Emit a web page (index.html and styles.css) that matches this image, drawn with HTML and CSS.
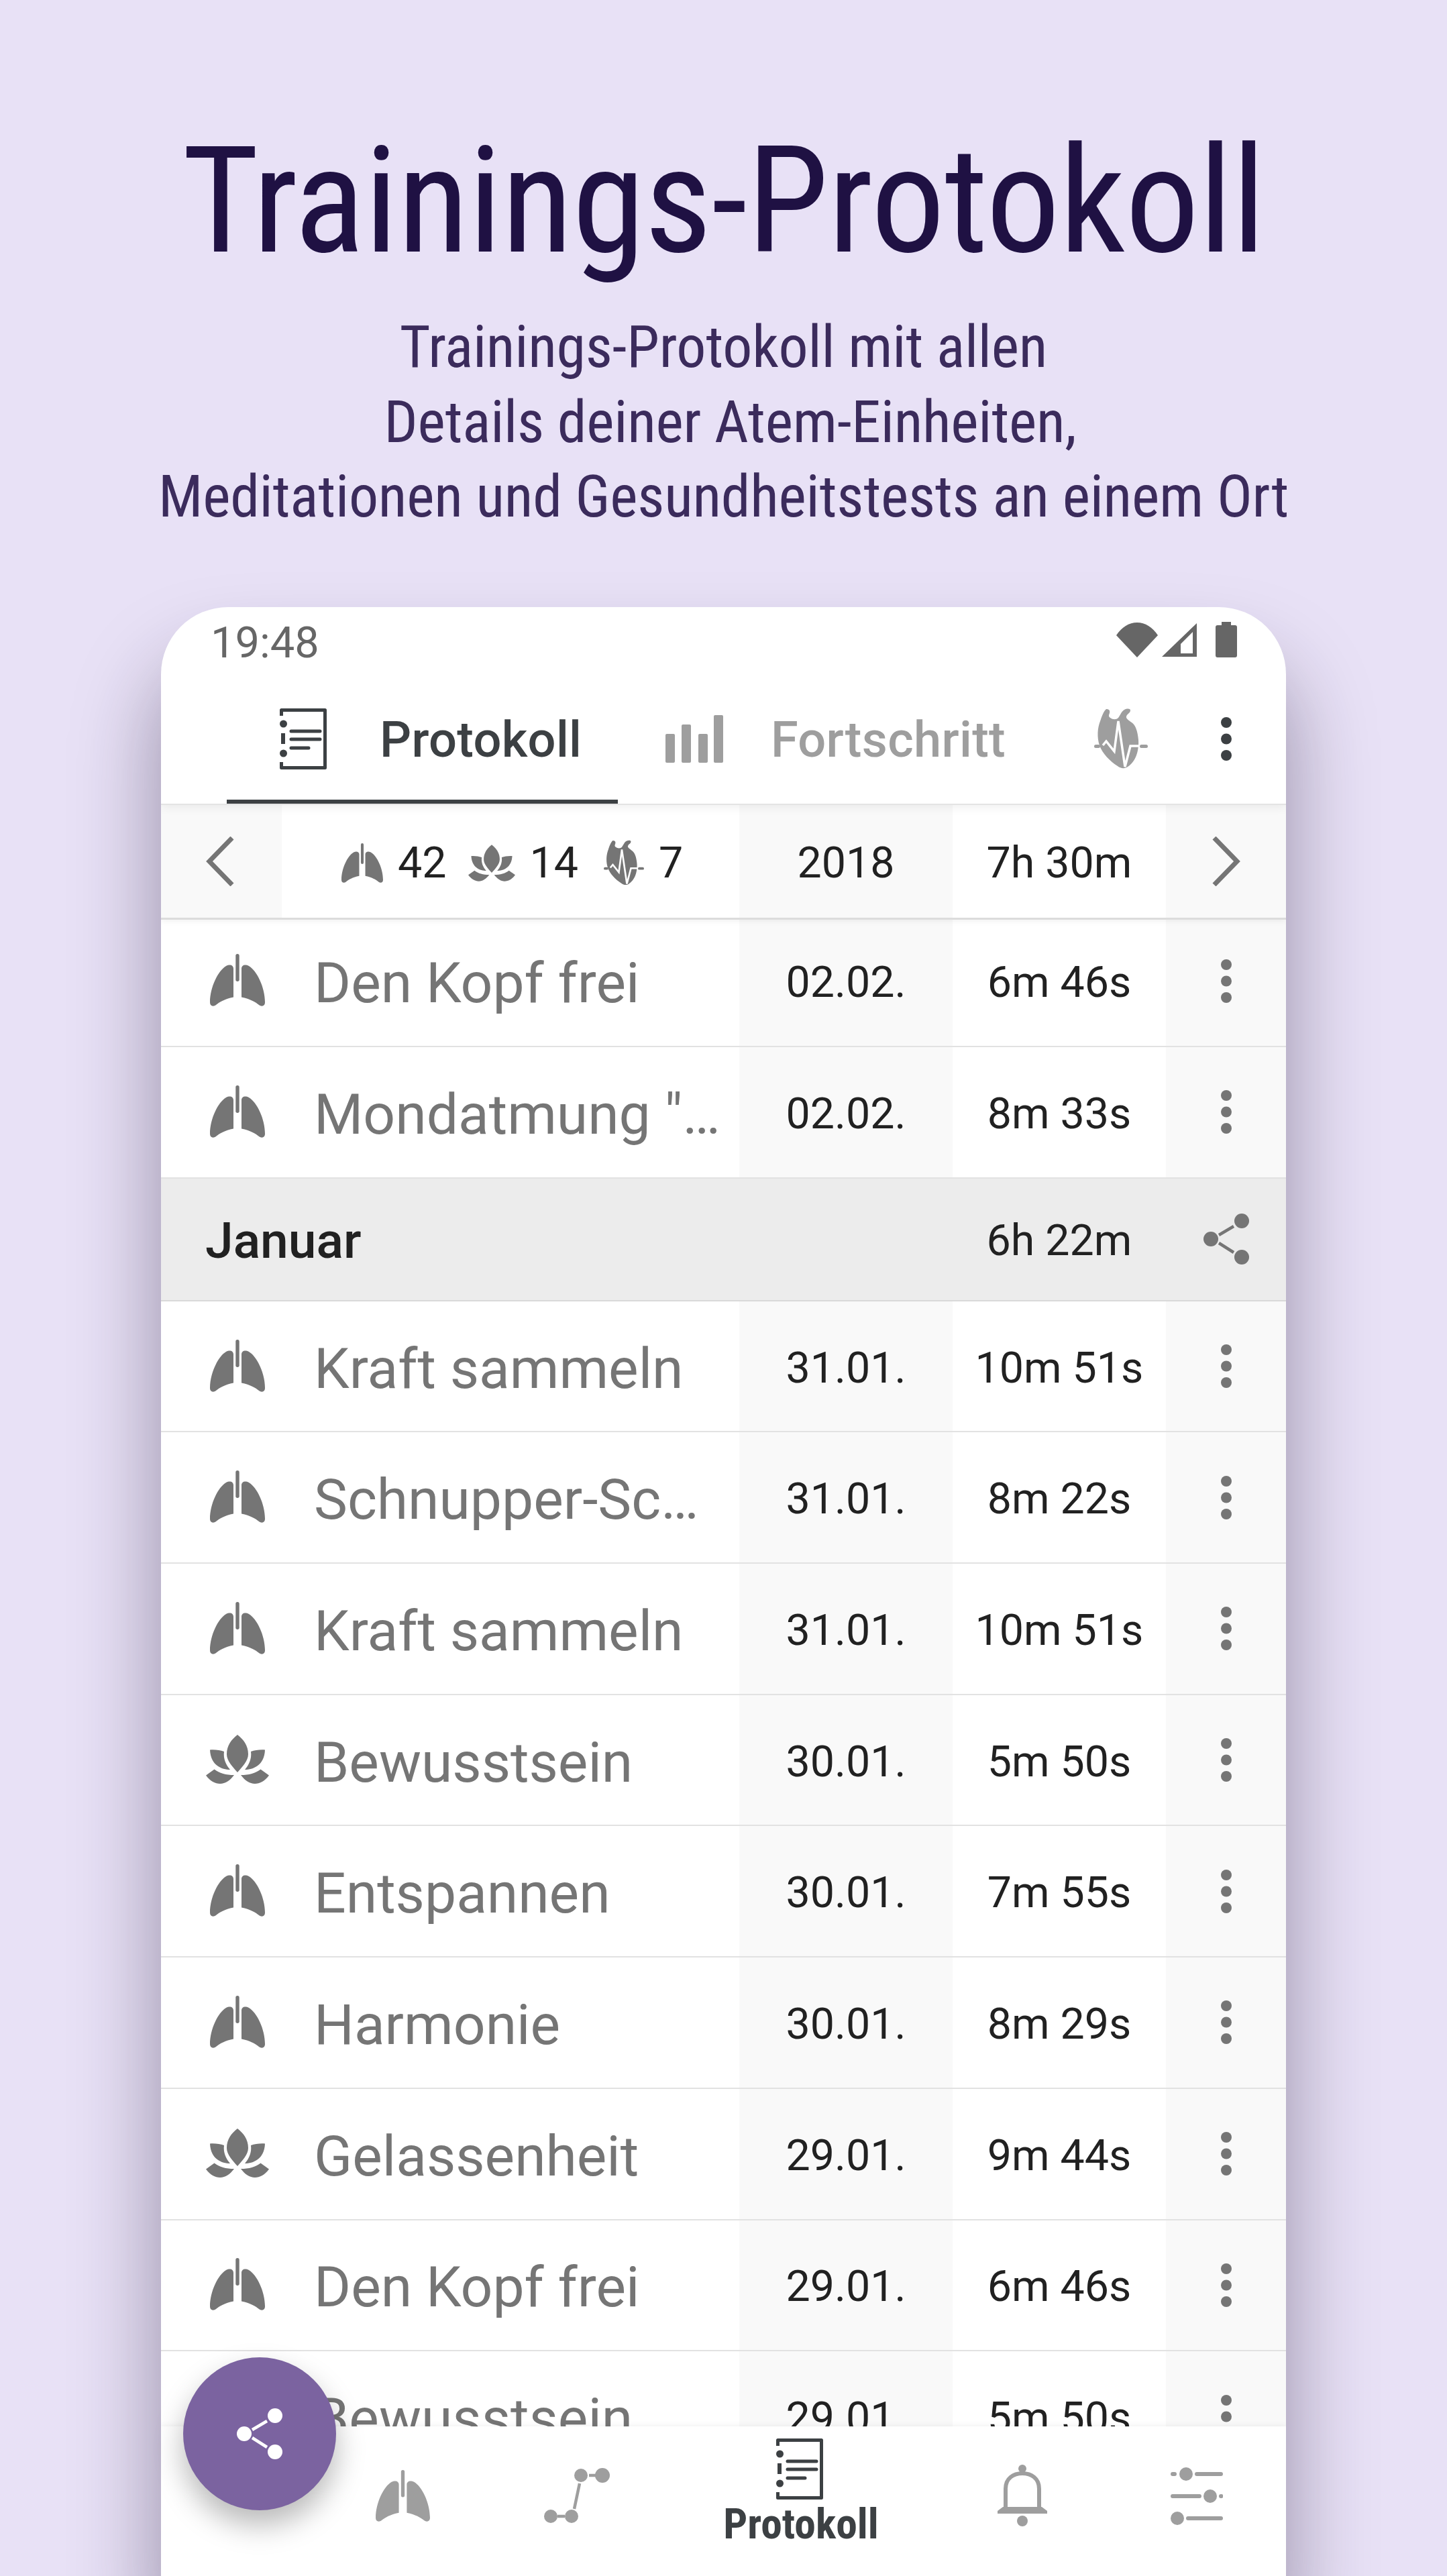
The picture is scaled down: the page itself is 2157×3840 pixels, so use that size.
FILE: index.html
```html
<!DOCTYPE html>
<html lang="de">
<head>
    <meta charset="UTF-8">
    <meta name="viewport" content="width=device-width, initial-scale=1.0">
    <title>Trainings-Protokoll</title>
    <link rel="stylesheet" href="styles.css">
</head>
<body>
    <svg class="sprites" xmlns="http://www.w3.org/2000/svg">
        <symbol id="lung" viewBox="0 0 82 78">
            <path d="M35 22V64.5C22 67 14 72 9 76C5 79 0 78 0 72C0 50 12 25 24 18C30 15 35 17 35 22Z"/>
            <path d="M47 22V64.5C60 67 68 72 73 76C77 79 82 78 82 72C82 50 70 25 58 18C52 15 47 17 47 22Z"/>
            <rect x="38.3" y="0" width="5.4" height="41" rx="2.7"/>
        </symbol>
        <symbol id="lotus" viewBox="0 0 94 73">
            <path d="M47 0C38 7 31 16 31 29C31 39 40 48 47 56C54 48 63 39 63 29C63 16 56 7 47 0Z"/>
            <path d="M6 22.5C14 22 21 23 27 25C25.5 36 30 45 36 52C24 52 7 46 6 22.5Z"/>
            <path d="M12.5 51.5L0 60.5C6 69 14 73 21 73C29 73 36 68 42 60C30 60 20 57.5 12.5 51.5Z"/>
            <g transform="matrix(-1 0 0 1 94 0)">
                <path d="M6 22.5C14 22 21 23 27 25C25.5 36 30 45 36 52C24 52 7 46 6 22.5Z"/>
                <path d="M12.5 51.5L0 60.5C6 69 14 73 21 73C29 73 36 68 42 60C30 60 20 57.5 12.5 51.5Z"/>
            </g>
        </symbol>
        <symbol id="heart" viewBox="0 0 80 92">
            <path d="M18 2C22 2 24 4 23 8C22 11 21 13 24 15C28 18 33 18 36 15C39 11 41 5 45 3C49 1 54 1 54 4C54 8 49 9 48 13C47 16 52 19 56 22C62 26 65 36 66 48C67 62 63 80 50 88C46 91 40 91 35 87C24 80 12 68 8 56C4 44 5 30 9 20C11 14 14 5 18 2Z"/>
            <path d="M13 56L18 50L30 65L36 20L46 88L54 57H68" fill="none" stroke="#fff" stroke-width="3.5"/>
            <rect x="0" y="55" width="9" height="5" rx="2.5"/>
            <rect x="68" y="55" width="12" height="5" rx="2.5"/>
        </symbol>
        <symbol id="log" viewBox="0 0 70 91">
            <path d="M2.5 11V2.5H67.5V88.5H2.5V80" fill="none" stroke="currentColor" stroke-width="5" stroke-linejoin="round"/>
            <circle cx="5.5" cy="23" r="5.5"/>
            <circle cx="5.5" cy="67" r="5.5"/>
            <rect x="2" y="37" width="6" height="16"/>
            <path d="M17 34H60M17 46H60M17 59H43" fill="none" stroke="currentColor" stroke-width="5" stroke-linecap="round"/>
        </symbol>
        <symbol id="bars" viewBox="0 0 87 71">
            <rect x="0" y="28" width="14" height="43" rx="2"/>
            <rect x="24" y="14" width="14" height="57" rx="2"/>
            <rect x="49" y="28" width="14" height="43" rx="2"/>
            <rect x="72" y="0" width="14" height="71" rx="2"/>
        </symbol>
        <symbol id="dots" viewBox="0 0 16 65">
            <circle cx="8" cy="8" r="8"/>
            <circle cx="8" cy="32.5" r="8"/>
            <circle cx="8" cy="57" r="8"/>
        </symbol>
        <symbol id="share" viewBox="0 0 68 76">
            <circle cx="11" cy="38" r="11"/>
            <circle cx="57" cy="11" r="11"/>
            <circle cx="57" cy="65" r="11"/>
            <path d="M23 32L45 19M23 44L45 58" fill="none" stroke="currentColor" stroke-width="4.5"/>
        </symbol>
        <symbol id="path" viewBox="0 0 99 83">
            <circle cx="55" cy="11" r="10"/>
            <circle cx="87" cy="11" r="11"/>
            <circle cx="10" cy="72" r="10"/>
            <circle cx="41" cy="72" r="10"/>
            <path d="M67 11H77M20 72H31M53 23L45 61" fill="none" stroke="currentColor" stroke-width="4.5"/>
        </symbol>
        <symbol id="bell" viewBox="0 0 74 93">
            <circle cx="37" cy="6" r="6"/>
            <circle cx="37" cy="84" r="8"/>
            <path d="M12 66V36C12 20 24 13 37 13C50 13 62 20 62 36V66" fill="none" stroke="currentColor" stroke-width="6"/>
            <path d="M0 73V69L8 63H66L74 69V73Z"/>
        </symbol>
        <symbol id="sliders" viewBox="0 0 78 86">
            <circle cx="23" cy="10" r="10"/>
            <circle cx="59" cy="43" r="10"/>
            <circle cx="10" cy="76" r="10"/>
            <path d="M3 10H6M39 10H75M3 43H43M75 43H75.5M26 76H75" fill="none" stroke="currentColor" stroke-width="6" stroke-linecap="round"/>
        </symbol>
    </svg>

    <header class="intro">
        <h1 class="intro-title">Trainings-Protokoll</h1>
        <p class="intro-text">Trainings-Protokoll mit allen<br>&nbsp;Details deiner Atem-Einheiten,<br>Meditationen und Gesundheitstests an einem Ort</p>
    </header>

    <main class="phone">
        <div class="status">
            <span class="status-time">19:48</span>
            <div class="status-icons">
                <svg class="wifi" viewBox="0 0 62 52"><path d="M0 19C8 7 19 0 31 0C43 0 54 7 62 19L31 52Z"/></svg>
                <svg class="signal" viewBox="0 0 52 50"><path fill-rule="evenodd" d="M52 0V50H0ZM28 45H46V13L28 31Z"/></svg>
                <svg class="battery" viewBox="0 0 32 53"><path d="M9 0H23V5H29C31 5 32 6 32 8V50C32 52 31 53 29 53H3C1 53 0 52 0 50V8C0 6 1 5 3 5H9Z"/></svg>
            </div>
        </div>

        <nav class="tabs">
            <div class="tab tab-active">
                <svg class="icon-log"><use href="#log"/></svg>
                <span>Protokoll</span>
            </div>
            <div class="tab">
                <svg class="icon-bars"><use href="#bars"/></svg>
                <span>Fortschritt</span>
            </div>
            <svg class="icon-heart"><use href="#heart"/></svg>
            <svg class="icon-dots tabs-menu"><use href="#dots"/></svg>
        </nav>

        <section class="summary">
            <div class="cell-nav">
                <svg class="chevron" viewBox="0 0 42 74"><path d="M39 2L5 37L39 72"/></svg>
            </div>
            <div class="summary-stats">
                <svg class="stat-lung"><use href="#lung"/></svg><span>42</span>
                <svg class="stat-lotus"><use href="#lotus"/></svg><span>14</span>
                <svg class="stat-heart"><use href="#heart"/></svg><span>7</span>
            </div>
            <div class="cell-date">2018</div>
            <div class="cell-time">7h 30m</div>
            <div class="cell-menu">
                <svg class="chevron" viewBox="0 0 42 74"><path d="M3 2L37 37L3 72"/></svg>
            </div>
        </section>

        <div class="list">
            <div class="row">
                <div class="row-name"><span class="row-icon"><svg class="icon-lung"><use href="#lung"/></svg></span><span>Den Kopf frei</span></div>
                <div class="cell-date">02.02.</div><div class="cell-time">6m 46s</div>
                <div class="cell-menu"><svg class="icon-dots"><use href="#dots"/></svg></div>
            </div>
            <div class="row">
                <div class="row-name"><span class="row-icon"><svg class="icon-lung"><use href="#lung"/></svg></span><span>Mondatmung "…</span></div>
                <div class="cell-date">02.02.</div><div class="cell-time">8m 33s</div>
                <div class="cell-menu"><svg class="icon-dots"><use href="#dots"/></svg></div>
            </div>
            <div class="month">
                <span class="month-name">Januar</span>
                <span class="cell-time">6h 22m</span>
                <div class="cell-menu"><svg class="icon-share"><use href="#share"/></svg></div>
            </div>
            <div class="row">
                <div class="row-name"><span class="row-icon"><svg class="icon-lung"><use href="#lung"/></svg></span><span>Kraft sammeln</span></div>
                <div class="cell-date">31.01.</div><div class="cell-time">10m 51s</div>
                <div class="cell-menu"><svg class="icon-dots"><use href="#dots"/></svg></div>
            </div>
            <div class="row">
                <div class="row-name"><span class="row-icon"><svg class="icon-lung"><use href="#lung"/></svg></span><span>Schnupper-Sc…</span></div>
                <div class="cell-date">31.01.</div><div class="cell-time">8m 22s</div>
                <div class="cell-menu"><svg class="icon-dots"><use href="#dots"/></svg></div>
            </div>
            <div class="row">
                <div class="row-name"><span class="row-icon"><svg class="icon-lung"><use href="#lung"/></svg></span><span>Kraft sammeln</span></div>
                <div class="cell-date">31.01.</div><div class="cell-time">10m 51s</div>
                <div class="cell-menu"><svg class="icon-dots"><use href="#dots"/></svg></div>
            </div>
            <div class="row">
                <div class="row-name"><span class="row-icon"><svg class="icon-lotus"><use href="#lotus"/></svg></span><span>Bewusstsein</span></div>
                <div class="cell-date">30.01.</div><div class="cell-time">5m 50s</div>
                <div class="cell-menu"><svg class="icon-dots"><use href="#dots"/></svg></div>
            </div>
            <div class="row">
                <div class="row-name"><span class="row-icon"><svg class="icon-lung"><use href="#lung"/></svg></span><span>Entspannen</span></div>
                <div class="cell-date">30.01.</div><div class="cell-time">7m 55s</div>
                <div class="cell-menu"><svg class="icon-dots"><use href="#dots"/></svg></div>
            </div>
            <div class="row">
                <div class="row-name"><span class="row-icon"><svg class="icon-lung"><use href="#lung"/></svg></span><span>Harmonie</span></div>
                <div class="cell-date">30.01.</div><div class="cell-time">8m 29s</div>
                <div class="cell-menu"><svg class="icon-dots"><use href="#dots"/></svg></div>
            </div>
            <div class="row">
                <div class="row-name"><span class="row-icon"><svg class="icon-lotus"><use href="#lotus"/></svg></span><span>Gelassenheit</span></div>
                <div class="cell-date">29.01.</div><div class="cell-time">9m 44s</div>
                <div class="cell-menu"><svg class="icon-dots"><use href="#dots"/></svg></div>
            </div>
            <div class="row">
                <div class="row-name"><span class="row-icon"><svg class="icon-lung"><use href="#lung"/></svg></span><span>Den Kopf frei</span></div>
                <div class="cell-date">29.01.</div><div class="cell-time">6m 46s</div>
                <div class="cell-menu"><svg class="icon-dots"><use href="#dots"/></svg></div>
            </div>
            <div class="row">
                <div class="row-name"><span class="row-icon"><svg class="icon-lotus"><use href="#lotus"/></svg></span><span>Bewusstsein</span></div>
                <div class="cell-date">29.01.</div><div class="cell-time">5m 50s</div>
                <div class="cell-menu"><svg class="icon-dots"><use href="#dots"/></svg></div>
            </div>
        </div>

        <footer class="bottom-nav">
            <svg class="nav-lung"><use href="#lung"/></svg>
            <svg class="nav-path"><use href="#path"/></svg>
            <div class="nav-active">
                <svg class="icon-log"><use href="#log"/></svg>
                <span class="nav-label">Protokoll</span>
            </div>
            <svg class="nav-bell"><use href="#bell"/></svg>
            <svg class="nav-sliders"><use href="#sliders"/></svg>
        </footer>

        <div class="fab"><svg class="fab-icon"><use href="#share"/></svg></div>
    </main>
</body>
</html>
```
FILE: styles.css
```css
* {
    box-sizing: border-box;
}
html, body {
    margin: 0;
    height: 3840px;
}
body {
    display: flex;
    flex-direction: column;
    align-items: center;
    background-color: #e8e1f6;
    font-family: "Roboto", "Liberation Sans", sans-serif;
    overflow: hidden;
}
svg {
    display: block;
    fill: currentColor;
    flex: none;
}
.sprites {
    position: absolute;
    width: 0;
    height: 0;
}

/* intro text above the phone */
.intro {
    height: 905px;
    padding-top: 180px;
    text-align: center;
    white-space: nowrap;
}
.intro-title {
    margin: 0;
    font-size: 220px;
    line-height: 240px;
    font-weight: 400;
    font-stretch: 75%;
    letter-spacing: -1px;
    color: #1f1143;
}
.intro-text {
    margin: 41px 0 0;
    font-size: 88px;
    line-height: 111.5px;
    font-stretch: 75%;
    letter-spacing: -0.25px;
    color: #3b2b5c;
}

/* phone frame */
.phone {
    position: relative;
    display: flex;
    flex-direction: column;
    width: 1677px;
    height: 2935px;
    background: #fff;
    border-radius: 100px 100px 0 0;
    box-shadow: 0 90px 120px 10px rgba(30, 20, 50, 0.36);
}
.status {
    display: flex;
    justify-content: space-between;
    align-items: center;
    height: 105px;
    padding: 0 73px 0 74px;
    flex: none;
}
.status-time {
    font-size: 65px;
    color: #666;
}
.status-icons {
    display: flex;
    align-items: center;
    gap: 6px;
    margin-bottom: 8px;
    color: #666;
}
.wifi {
    width: 62px;
    height: 52px;
}
.signal {
    width: 52px;
    height: 50px;
    margin-right: 22px;
}
.battery {
    width: 32px;
    height: 53px;
}

/* tab bar */
.tabs {
    position: relative;
    z-index: 2;
    display: flex;
    flex: none;
    align-items: center;
    height: 190px;
    padding-left: 98px;
    background: #fff;
    border-bottom: 2px solid #e4e4e4;
    box-shadow: 0 3px 14px rgba(0, 0, 0, 0.07);
    clip-path: inset(0 0 -24px 0);
    font-size: 74px;
    font-weight: 500;
    letter-spacing: 0.3px;
    color: #9e9e9e;
}
.tab {
    display: flex;
    align-items: center;
    height: 100%;
    border-bottom: 6px solid transparent;
}
.tab span {
    padding-top: 3px;
}
.tab-active {
    width: 583px;
    padding-left: 79px;
    gap: 79px;
    color: #3c4043;
    border-bottom-color: #3c4043;
}
.tab:not(.tab-active) {
    margin-left: 71px;
    gap: 70px;
}
.icon-log {
    width: 70px;
    height: 91px;
}
.icon-bars {
    width: 87px;
    height: 71px;
}
.icon-heart {
    width: 80px;
    height: 92px;
    margin: 0 0 6px 132px;
    color: #9e9e9e;
}
.icon-dots {
    width: 16px;
    height: 65px;
    color: #757575;
}
.tabs-menu {
    margin: 0 0 6px 109px;
    color: #3c4043;
}

/* shared table columns */
.summary, .row {
    display: grid;
    grid-template-columns: 862px 318px 318px 179px;
    align-items: stretch;
    font-size: 64.5px;
    color: #212121;
}
.summary {
    grid-template-columns: 180px 682px 318px 318px 179px;
    flex: none;
    height: 171px;
    position: relative;
    z-index: 1;
    border-bottom: 3px solid #dcdcdc;
    box-shadow: 0 3px 8px rgba(0, 0, 0, 0.05);
    clip-path: inset(0 0 -16px 0);
    background: #fff;
}
.cell-nav, .cell-date, .cell-time, .cell-menu {
    display: flex;
    align-items: center;
    justify-content: center;
}
.cell-nav, .cell-date, .cell-menu {
    background: #f9f9f9;
}
.cell-date, .cell-time {
    padding-top: 4px;
}
.chevron {
    width: 42px;
    height: 74px;
    fill: none;
    stroke: #757575;
    stroke-width: 7;
}
.cell-nav .chevron {
    margin-left: -4px;
}
.summary-stats {
    display: flex;
    align-items: center;
    padding: 4px 0 0 89px;
    color: #212121;
}
.summary-stats svg {
    color: #757575;
}
.stat-lung {
    width: 62px;
    height: 61px;
    margin-right: 22px;
}
.stat-lotus {
    width: 70px;
    height: 57px;
    margin: 0 22px 0 32px;
}
.stat-heart {
    width: 60px;
    height: 70px;
    margin: 0 22px 0 38px;
}

/* list */
.list {
    flex: 1;
    overflow: hidden;
    min-height: 0;
}
.row {
    height: 195.7px;
    border-bottom: 2px solid #e2e2e2;
}
.row:first-child {
    margin-top: -5.7px;
}
.row-name {
    display: flex;
    align-items: center;
    padding: 7px 0 0 67px;
    font-size: 84px;
    color: #757575;
    white-space: nowrap;
    overflow: hidden;
}
.row-icon {
    display: flex;
    justify-content: center;
    width: 94px;
    margin-top: -9px;
    margin-right: 67px;
    color: #757575;
}
.icon-lung {
    width: 82px;
    height: 78px;
}
.icon-lotus {
    width: 94px;
    height: 73px;
}
.month {
    display: grid;
    grid-template-columns: 1180px 318px 179px;
    align-items: center;
    height: 183px;
    background: #ececec;
    border-bottom: 2px solid #d9d9d9;
    font-size: 64.5px;
    color: #212121;
}
.month-name {
    padding: 4px 0 0 66px;
    font-size: 75px;
    font-weight: 500;
}
.month .cell-menu {
    background: none;
}
.icon-share {
    width: 68px;
    height: 76px;
    color: #757575;
}

/* bottom navigation */
.bottom-nav {
    position: relative;
    display: grid;
    grid-template-columns: 260px 260px 404px 260px 260px;
    justify-items: center;
    align-items: center;
    flex: none;
    height: 223px;
    padding: 0 0 16px 230px;
    background: #fff;
    color: #9e9e9e;
    box-shadow: 0 -2px 8px rgba(0, 0, 0, 0.05);
    clip-path: inset(-12px 0 0 0);
}
.nav-lung {
    width: 83px;
    height: 77px;
}
.nav-path {
    width: 99px;
    height: 83px;
}
.nav-bell {
    width: 74px;
    height: 93px;
}
.nav-sliders {
    width: 78px;
    height: 86px;
}
.nav-active {
    display: flex;
    flex-direction: column;
    align-items: center;
    align-self: start;
    padding-top: 18px;
    color: #3c4043;
    font-size: 63.5px;
    line-height: 74px;
    font-weight: 700;
    font-stretch: 85%;
}
.nav-label {
    margin-left: 4px;
}
.fab {
    position: absolute;
    left: 33px;
    bottom: 98px;
    display: flex;
    align-items: center;
    justify-content: center;
    width: 228px;
    height: 228px;
    border-radius: 50%;
    background: #7b63a0;
    box-shadow: 0 22px 44px rgba(0, 0, 0, 0.28);
    color: #fff;
}
.fab-icon {
    width: 68px;
    height: 76px;
}
```
